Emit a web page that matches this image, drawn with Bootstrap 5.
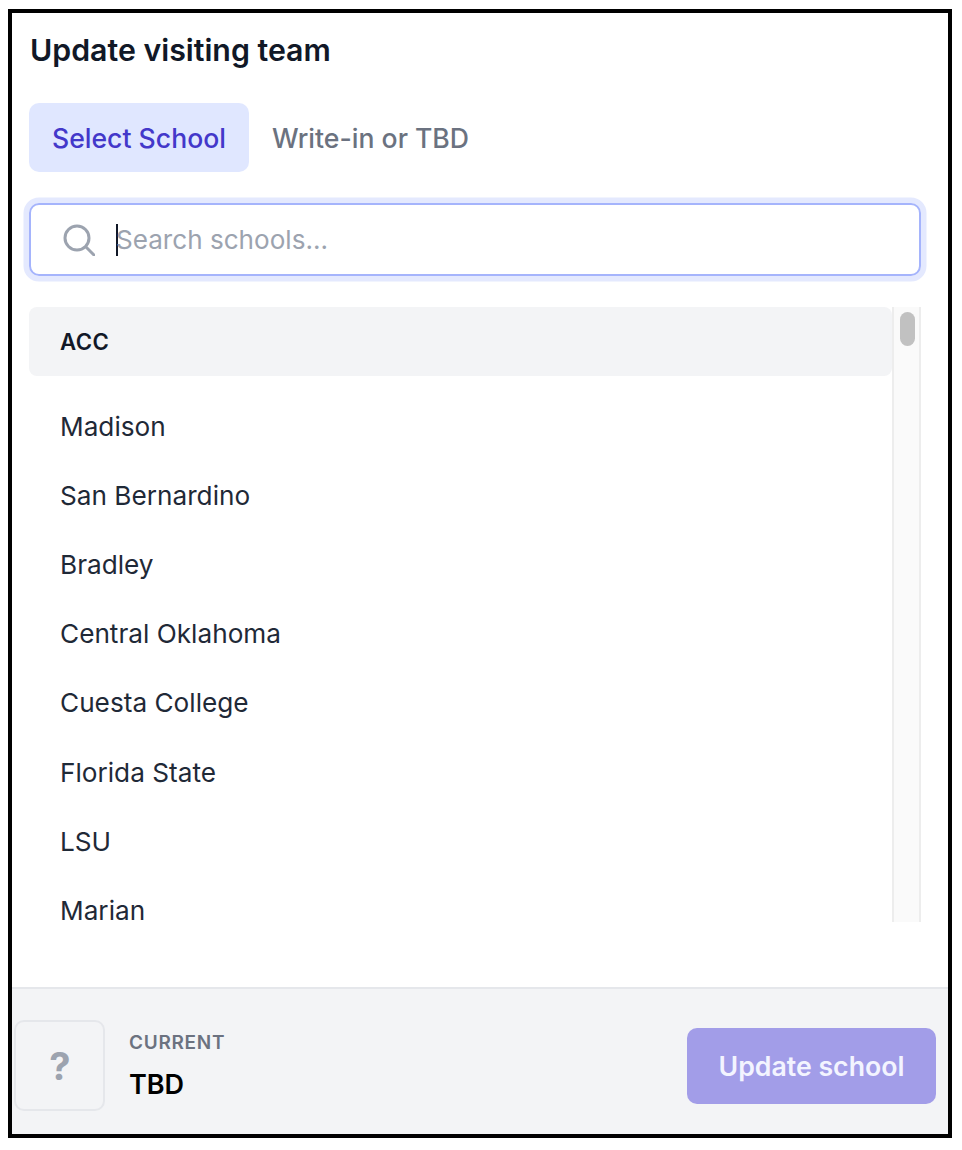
<!DOCTYPE html>
<html lang="en">
<head>
<meta charset="utf-8">
<title>Update visiting team</title>
<link rel="stylesheet" href="https://cdn.jsdelivr.net/npm/bootstrap@5.3.0/dist/css/bootstrap.min.css">
<style>
html, body { background: #fff; }
body { font-family: Inter, "Liberation Sans", sans-serif; margin: 0; }
.panel-frame { width: 944px; height: 1129px; margin: 8.5px 0 0 8px; border: 4px solid #000; background: #fff; }
.panel-body-area { padding: 20px 0 0 17px; height: 974.5px; flex: none; }
.panel-heading { font-size: 30.3px; line-height: 34px; font-weight: 600; color: #111827; margin: 0 0 36.5px 1px; }
.tab-pill { font-size: 26.6px; line-height: 33px; font-weight: 500; padding: 19px 23px 17px; border-radius: 10px; border: 0; background: transparent; color: #6b7280; }
.tab-pill.is-on { background: #e0e7ff; color: #4338ca; }
.search-box { width: 891.5px; height: 73px; margin: 31px 0 31px 0; border: 2px solid #a5b4fc; border-radius: 10px; box-shadow: 0 0 0 5.5px #e4e9fe; padding-left: 32px; gap: 21px; }
.search-box svg { flex: none; }
.search-input { border: 0; outline: 0; flex: 1; font-size: 26.1px; color: #111827; background: transparent; padding: 0; min-width: 0; caret-color: #111827; }
.search-input::placeholder { color: #9ca3af; opacity: 1; }
.caret-bar { width: 2px; height: 32px; background: #111827; margin-right: -23px; flex: none; }
.list-wrap { width: 892px; height: 615px; }
.list-col { width: 863px; }
.group-head { height: 69px; background: #f3f4f6; border-radius: 8px; font-size: 22.2px; font-weight: 600; color: #111827; padding: 1px 0 0 31px; letter-spacing: .4px; margin-bottom: 16px; }
.school-row { height: 69.15px; font-size: 26.2px; color: #1f2937; padding-left: 31px; flex: none; }
.track { width: 29px; background: #fafafa; border-left: 2px solid #ededed; border-right: 2px solid #ededed; padding: 5px 4px 0 6px; }
.thumb { height: 34px; border-radius: 8px; background: #c1c1c1; }
.panel-foot { flex: 1; background: #f3f4f6; border-top: 2px solid #e5e7eb; padding: 31px 12px 0 2px; }
.unknown-box { width: 91px; height: 91px; border: 2px solid #e5e7eb; border-radius: 10px; font-size: 38px; font-weight: 700; color: #9ca3af; line-height: 1; padding-left: 1px; }
.current-text { padding-top: 11px; }
.current-label { font-size: 19px; line-height: 24px; font-weight: 600; color: #6b7280; letter-spacing: .7px; }
.current-name { font-size: 27px; line-height: 32px; font-weight: 600; color: #000; margin-top: 14px; }
.update-btn { width: 249px; height: 76px; margin-top: 8px; background: #a29de8; border: 0; border-radius: 10px; color: #f3f4ff; font-size: 26.7px; font-weight: 600; }
</style>
</head>
<body>
<div class="panel-frame d-flex flex-column">
  <div class="panel-body-area">
    <h1 class="panel-heading">Update visiting team</h1>
    <div class="d-flex gap-0">
      <button type="button" class="tab-pill is-on">Select School</button>
      <button type="button" class="tab-pill">Write-in or TBD</button>
    </div>
    <div class="search-box d-flex align-items-center">
      <svg width="32" height="32" viewBox="0 0 32 32" fill="none" stroke="#9ca3af" stroke-width="3" stroke-linecap="round"><circle cx="14" cy="14" r="12"/><path d="M23 23l8 8"/></svg>
      <span class="caret-bar"></span>
      <input class="search-input" type="text" placeholder="Search schools...">
    </div>
    <div class="list-wrap d-flex">
      <div class="list-col d-flex flex-column">
        <div class="group-head d-flex align-items-center flex-shrink-0">ACC</div>
        <div class="school-row d-flex align-items-center">Madison</div>
        <div class="school-row d-flex align-items-center">San Bernardino</div>
        <div class="school-row d-flex align-items-center">Bradley</div>
        <div class="school-row d-flex align-items-center">Central Oklahoma</div>
        <div class="school-row d-flex align-items-center">Cuesta College</div>
        <div class="school-row d-flex align-items-center">Florida State</div>
        <div class="school-row d-flex align-items-center">LSU</div>
        <div class="school-row d-flex align-items-center">Marian</div>
      </div>
      <div class="track"><div class="thumb"></div></div>
    </div>
  </div>
  <div class="panel-foot d-flex justify-content-between align-items-start">
    <div class="d-flex">
      <div class="unknown-box d-flex align-items-center justify-content-center">?</div>
      <div class="ms-4 current-text">
        <div class="current-label">CURRENT</div>
        <div class="current-name">TBD</div>
      </div>
    </div>
    <button type="button" class="update-btn">Update school</button>
  </div>
</div>
<script src="https://cdn.jsdelivr.net/npm/bootstrap@5.3.0/dist/js/bootstrap.bundle.min.js"></script>
</body>
</html>
